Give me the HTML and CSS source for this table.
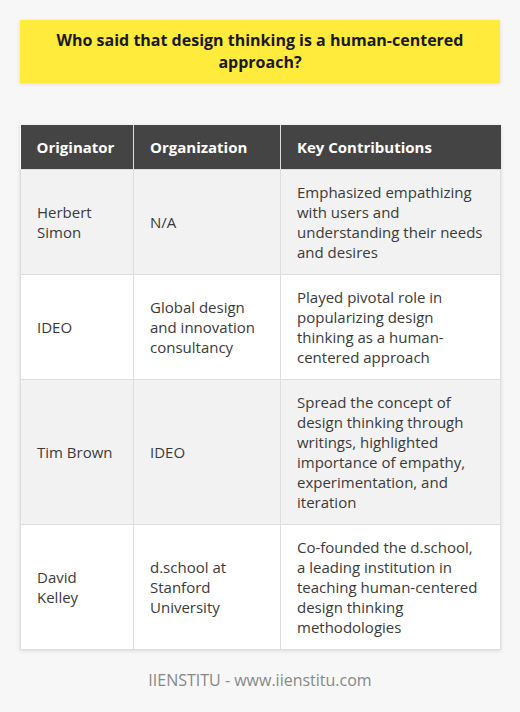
FILE: index.html
```html
<!DOCTYPE html>
<html>
<head>
<meta charset="utf-8">
<link rel="stylesheet" href="styles.css">
</head>
<body>
<div class="page">
  <div class="title">Who said that design thinking is a human-centered approach?</div>
  <table class="grid">
    <colgroup>
      <col class="c1"><col class="c2"><col class="c3">
    </colgroup>
    <thead>
      <tr><th>Originator</th><th>Organization</th><th>Key Contributions</th></tr>
    </thead>
    <tbody>
      <tr><td>Herbert Simon</td><td>N/A</td><td>Emphasized empathizing with users and understanding their needs and desires</td></tr>
      <tr><td>IDEO</td><td>Global design and innovation consultancy</td><td>Played pivotal role in popularizing design thinking as a human-centered approach</td></tr>
      <tr><td>Tim Brown</td><td>IDEO</td><td>Spread the concept of design thinking through writings, highlighted importance of empathy, experimentation, and iteration</td></tr>
      <tr><td>David Kelley</td><td>d.school at Stanford University</td><td>Co-founded the d.school, a leading institution in teaching human-centered design thinking methodologies</td></tr>
    </tbody>
  </table>
  <div class="footer">IIENSTITU - www.iienstitu.com</div>
</div>
</body>
</html>
```
FILE: styles.css
```css
html, body {
  margin: 0;
  padding: 0;
  background: #f7f7f7;
}
.page {
  padding: 20px 20px 0;
  font-family: "Open Sans", "DejaVu Sans", sans-serif;
  color: #333;
}
.title {
  background: #ffeb3b;
  color: #1a1a1a;
  font-weight: 700;
  font-size: 16px;
  line-height: 22px;
  text-align: center;
  padding: 9px 20px 10px;
  box-shadow: 0 1px 4px rgba(0,0,0,0.12);
}
.grid {
  margin-top: 42px;
  width: 480px;
  border-collapse: collapse;
  table-layout: fixed;
  background: #fff;
  box-shadow: 0 1px 4px rgba(0,0,0,0.12);
  font-size: 15px;
  line-height: 20px;
}
.c1 { width: 113px; }
.c2 { width: 147px; }
.c3 { width: 220px; }
.grid th {
  background: #444;
  color: #fff;
  font-weight: 700;
  text-align: left;
  padding: 12px 16px;
  border-left: 1px solid #ddd;
}
.grid th:first-child { border-left: none; }
.grid td {
  padding: 12px 16px;
  border: 1px solid #ddd;
  vertical-align: middle;
  color: #3a3a3a;
}
.grid tbody tr:nth-child(odd) td { background: #f2f2f2; }
.grid tbody tr:nth-child(even) td { background: #fff; }
.footer {
  text-align: center;
  color: #888;
  font-size: 16px;
  line-height: 20px;
  margin-top: 20px;
}
```
